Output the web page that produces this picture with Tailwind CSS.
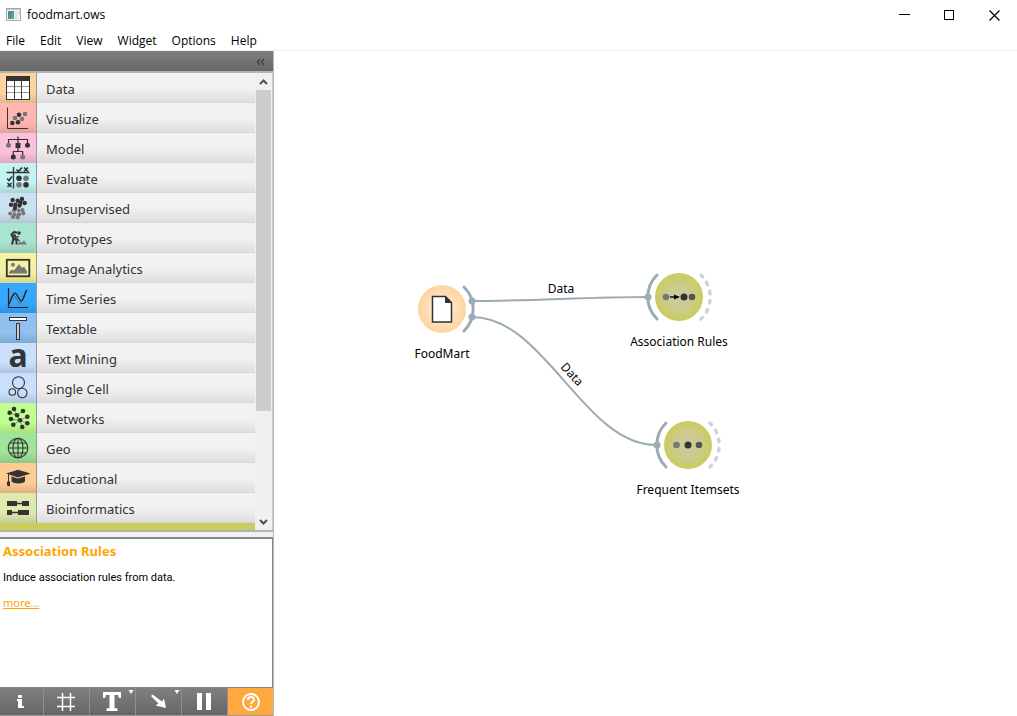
<!DOCTYPE html>
<html lang="en">
<head>
<meta charset="utf-8">
<title>foodmart.ows</title>
<script src="https://cdn.jsdelivr.net/npm/@tailwindcss/browser@4"></script>
</head>
<body class="h-screen flex flex-col overflow-hidden bg-white text-black text-[12px] font-['Open_Sans',sans-serif]">
<header class="shrink-0 border-b border-[#f0f0f0]">
  <div class="h-[30px] flex items-center pl-[6px]">
    <svg class="w-[16px] h-[16px] mr-[5px]" viewBox="0 0 16 16" aria-hidden="true">
      <defs><linearGradient id="win" x1="0" y1="0" x2="1" y2="1"><stop offset="0" stop-color="#4a7f9c"/><stop offset="1" stop-color="#58b07c"/></linearGradient></defs>
      <rect x=".5" y="1.5" width="14" height="12" fill="#f4f4f4" stroke="#a3a9ad"/><path d="M1 2.500h13" stroke="#c5cbd0"/><rect x="2" y="4" width="6" height="8" fill="url(#win)"/><rect x="9" y="4" width="2" height="8" fill="#dfe1e4"/><rect x="12" y="4" width="2" height="4" fill="#d5dce8"/>
    </svg>
    <h1 class="text-[12px] leading-4">foodmart.ows</h1>
    <div class="ml-auto flex h-full">
      <button aria-label="Minimize" class="w-[45px] flex items-center justify-center"><svg width="11" height="11"><path d="M0 4.500h11" stroke="#000"/></svg></button>
      <button aria-label="Maximize" class="w-[45px] flex items-center justify-center"><svg width="11" height="11"><rect x=".5" y=".5" width="9" height="9" fill="none" stroke="#000"/></svg></button>
      <button aria-label="Close" class="w-[45px] flex items-center justify-center"><svg width="11" height="11"><path d="M.5 .5l10 10M10.500 .5l-10 10" stroke="#000" stroke-width="1.200"/></svg></button>
    </div>
  </div>
  <nav class="h-[20px] flex items-end gap-[15px] pl-[6px] leading-[18px]">
    <button>File</button><button>Edit</button><button>View</button><button>Widget</button><button>Options</button><button>Help</button>
  </nav>
</header>
<div class="flex-1 min-h-0 flex">
  <aside class="w-[274px] shrink-0 flex flex-col border-r border-[#b4b9b9] bg-[#f0f0f0]">
    <div class="h-[20px] shrink-0 bg-linear-to-b from-[#808080] to-[#666] flex items-end justify-end pr-[8px] pb-[5px]">
      <button aria-label="Collapse"><svg class="block" width="10" height="8" fill="none" stroke="#444" stroke-width="1.500"><path d="M5 1L2.500 4L5 7M9 1L6.500 4L9 7"/></svg></button>
    </div>
    <div class="flex-1 min-h-0 flex border-y-2 border-[#aeb4b4]">
      <ul class="flex-1 min-w-0 overflow-hidden text-[13px] text-[#333] font-['Noto_Sans',sans-serif]" id="categories"></ul>
      <div class="w-[17px] shrink-0 flex flex-col bg-[#f0f0f0]">
        <button aria-label="Scroll up" class="h-[17px] flex items-center justify-center"><svg width="9" height="6"><path d="M1 5L4.500 1.500L8 5" fill="none" stroke="#505050" stroke-width="2"/></svg></button>
        <div class="flex-1 min-h-0 px-px"><div class="h-[76%] bg-[#cdcdcd]"></div></div>
        <button aria-label="Scroll down" class="h-[17px] flex items-center justify-center"><svg width="9" height="6"><path d="M1 1L4.500 4.500L8 1" fill="none" stroke="#505050" stroke-width="2"/></svg></button>
      </div>
      <div class="w-px bg-[#c8cccc]"></div>
    </div>
    <div class="h-[5px] shrink-0"></div>
    <section class="h-[151px] shrink-0 bg-white border-t-2 border-r border-b border-[#828787] pl-[3px] pt-[4px] font-['Noto_Sans',sans-serif]">
      <h2 class="text-[13px] leading-4 font-bold text-[#ffa500]">Association Rules</h2>
      <p class="text-[11px] leading-4 mt-[11px] font-[Roboto,sans-serif]">Induce association rules from data.</p>
      <a href="#" class="block w-fit text-[11px] leading-4 mt-[9px] text-[#ffa500] underline">more...</a>
    </section>
    <div class="h-[28px] shrink-0 flex bg-linear-to-b from-[#808080] to-[#666] border-b border-[#999]">
      <button aria-label="Info" class="w-[44px] border-r border-[#8f8f8f]"><svg class="block" width="43" height="27" fill="#fff"><rect x="18" y="7" width="4" height="3" rx="1"/><path d="M17 11h5v7h2v2h-6v-7h-1z"/></svg></button>
      <button aria-label="Grid" class="w-[46px] border-r border-[#8f8f8f]"><svg class="block" width="45" height="27" stroke="#fff" stroke-width="1.500"><path d="M18.500 5v18M26.500 5v18M13 9.500h18M13 18.500h18"/></svg></button>
      <button aria-label="Text annotation" class="w-[46px] border-r border-[#8f8f8f]"><svg class="block" width="45" height="27" fill="#fff"><path d="M13 4h18v6h-2l-1-3h-3.500v13l3 .5V23h-11v-2.500l3-.5V7H16l-1 3h-2zM38.500 2h5l-2.500 4z"/></svg></button>
      <button aria-label="Arrow annotation" class="w-[46px] border-r border-[#8f8f8f]"><svg class="block" width="45" height="27" fill="#fff"><path d="M15 8l1.500-1.500L26 13.500l2-3L30 20l-10.500-2.500 3-2zM38.500 2h5l-2.500 4z"/></svg></button>
      <button aria-label="Pause" class="w-[46px] border-r border-[#8f8f8f]"><svg class="block" width="45" height="27" fill="#fff"><path d="M15 5h5v17h-5zM24 5h5v17h-5z"/></svg></button>
      <button aria-label="Help" class="flex-1 bg-[#ffa840]"><svg class="block" width="45" height="27" fill="none" stroke="#fff" stroke-width="2"><circle cx="23" cy="14" r="8"/><path d="M20 12c0-4 6-4 6-.5 0 2.500-3 2-3 4.500M23 17.500v2"/></svg></button>
    </div>
  </aside>
  <main class="flex-1 min-w-0">
    <svg class="block w-full h-full font-['Noto_Sans',sans-serif]" role="img" aria-label="Workflow canvas">
      <defs>
        <radialGradient id="peach"><stop offset="0" stop-color="#fff3e5"/><stop offset="1" stop-color="#ffd39f"/></radialGradient>
        <radialGradient id="olive"><stop offset="0" stop-color="#cbcb9f"/><stop offset=".5" stop-color="#cbcb90"/><stop offset="1" stop-color="#cbcb5e"/></radialGradient>
      </defs>
      <g fill="none" stroke="#9cacb4" stroke-width="2">
        <path d="M198 250C258 250 314 246 374 246"/>
        <path d="M198 266C271 266 310 394 382 394"/>
      </g>
      <g fill="none" stroke="#9cacb4" stroke-width="3" stroke-linecap="round">
        <path d="M190 236a31 31 0 0 1 0 44"/>
        <path d="M383 224a31 31 0 0 0 0 44"/>
        <path d="M392 372a31 31 0 0 0 0 44"/>
      </g>
      <g fill="none" stroke="#ccd5d9" stroke-width="3.500" stroke-linecap="round" stroke-dasharray="2.500 6.800">
        <path d="M427 224a31 31 0 0 1 0 44"/>
        <path d="M436 372a31 31 0 0 1 0 44"/>
      </g>
      <g fill="#9cacb4"><circle cx="198" cy="250" r="3.500"/><circle cx="198" cy="266" r="3.500"/><circle cx="374" cy="246" r="3.500"/><circle cx="383" cy="394" r="3.500"/></g>
      <circle cx="168" cy="258" r="24" fill="url(#peach)"/>
      <circle cx="405" cy="246" r="24" fill="url(#olive)"/>
      <circle cx="414" cy="394" r="24" fill="url(#olive)"/>
      <path d="M158.500 245.500h13l6 6v19.500h-19z" fill="#fff" stroke="#333" stroke-width="1.500"/><path d="M171 245v7h7z" fill="#333"/>
      <circle cx="392" cy="246" r="3.300" fill="#777"/><path d="M396 246h6" stroke="#111" stroke-width="1.500"/><path d="M400 243.500l6 2.500-6 2.500z"/><circle cx="410" cy="246" r="3.500" fill="#333"/><circle cx="418" cy="246" r="3.300" fill="#555"/>
      <circle cx="402.500" cy="394" r="3.300" fill="#777"/><circle cx="414" cy="394" r="3.500" fill="#333"/><circle cx="425" cy="394" r="3.300" fill="#555"/>
      <g font-size="12" text-anchor="middle">
        <text x="287" y="242">Data</text>
        <text transform="translate(295 326) rotate(48)" x="0" y="0">Data</text>
        <text x="168" y="307">FoodMart</text>
        <text x="405" y="295">Association Rules</text>
        <text x="414" y="443">Frequent Itemsets</text>
      </g>
    </svg>
  </main>
</div>
<script>
const dots = (list, r, fill) => list.map(p => `<circle cx="${p[0]}" cy="${p[1]}" r="${r}" fill="${fill}"/>`).join('');
const D = '#333', G = '#777';
const categories = [
  ['Data', '#ffd39f', '<rect x="6.5" y="3.500" width="23" height="23" fill="#fff" stroke="#333"/><path d="M6 3h24v5H6z" fill="#333"/><path d="M7 13.500h22M7 19.500h22" stroke="#999"/><path d="M14.500 8v18M21.500 8v18" stroke="#444"/>'],
  ['Visualize', '#ffb7b1', '<path d="M7.500 4.500v21H28" fill="none" stroke="#333"/>' + dots([[12.3,20],[18,19.3],[19,11.7]], 2.3, D) + dots([[15,15],[25,11],[22,16]], 2.3, G)],
  ['Model', '#fac1d9', '<path d="M18 3.500v9M8.500 12V6.500h19V12M13.300 24v-5.500h9.400V24M18 15v3.500" fill="none" stroke="#333" stroke-width="1.200"/><path d="M15.500 10h5v5h-5z" fill="#333"/>' + dots([[8.5,12.3],[22.7,24]], 2.5, G) + dots([[27.5,12.3],[13.3,24]], 2.5, D)],
  ['Evaluate', '#c3f3f3', '<path d="M13.500 4v21.500M6.500 9.500h23" stroke="#333" stroke-width="1.300"/><path d="M16.500 6.500l2 2 3.500-4M24 4.500l4 4M28 4.500l-4 4M7 15.500l2 2 3-4M7.500 20l4 4M11.500 20l-4 4" fill="none" stroke="#333" stroke-width="1.700"/>' + dots([[19,15.3],[26,21.7]], 2.8, D) + dots([[26,15.3],[19,21.7]], 2.8, G)],
  ['Unsupervised', '#cae1ef', dots([[14,17.5],[18.7,17.5],[22.5,17],[10.3,20.5],[14.7,21.5],[19,21.5],[23.3,20.3],[13,24],[17.7,24.3]], 2.1, G) + dots([[12.7,7],[17.7,7.7],[22,6],[11,11.7],[15.3,11.7],[19.5,12.5],[24.7,10],[15,15],[20.5,9.8]], 2.2, D)],
  ['Prototypes', '#a9e4d0', '<path d="M17 21.500l3-3 2 1 2-2 3 4z" fill="#777"/><circle cx="19" cy="10" r="1.800" fill="#333"/><path d="M17 9.500l-3-.5-2.500 2.500 2 4-1.500 6M13.500 15l3 2.500v4" fill="none" stroke="#333" stroke-width="2"/><path d="M14.500 11l1.500 3 3-.5M13 12l6.500 6" fill="none" stroke="#333" stroke-width="1.200"/>'],
  ['Image Analytics', '#f5f2a1', '<rect x="6.800" y="6.800" width="22.500" height="16.500" fill="none" stroke="#333" stroke-width="1.800"/><circle cx="13" cy="11.700" r="2" fill="#777"/><path d="M9 20.500v-1.500l3-2.500 2 1 5-6.500 3 4 2-1.500 3 5v2z" fill="#777"/>'],
  ['Time Series', '#35a7ff', '<path d="M8.500 5v19.500H28" fill="none" stroke="#222" stroke-width="1.200"/><path d="M10 17c3-9 5-4 8 1s4 0 8-10" fill="none" stroke="#5a7188" stroke-width="1.300"/><path d="M9 21c4-8 5-14 8-9s4 8 6 4 2-7 4-9" fill="none" stroke="#222" stroke-width="1.300"/>'],
  ['Textable', '#8fc0ef', '<rect x="9.500" y="4.500" width="17" height="3" fill="#fff" stroke="#333"/><rect x="16.500" y="10.500" width="3" height="16" fill="#ccc" stroke="#333"/>'],
  ['Text Mining', '#c9dffc', '<text x="18" y="24" text-anchor="middle" font-size="32" font-weight="700" fill="#333">a</text>'],
  ['Single Cell', '#c9dffc', '<g fill="none" stroke="#333" stroke-width="1.100"><circle cx="18.500" cy="9.700" r="6"/><circle cx="12.300" cy="19" r="3.300"/><circle cx="22.300" cy="20" r="4.700"/></g>'],
  ['Networks', '#bfff8f', '<path d="M14 6l3 6.500 6-4.500M9.700 9.700l7.300 2.600 3 5-9-1.300M13.300 21.700l6.700-4.400 2.300 6.700M17 12.300l3 5 7.300 3M20 17.300l7.300-3.600" fill="none" stroke="#666" stroke-width=".7"/>' + dots([[14,6],[23,8],[9.7,9.7],[17,12.3],[27.3,13.7],[11,16],[20,17.3],[13.3,21.7],[22.3,24],[27.3,20.3]], 2.3, D)],
  ['Geo', '#9fe599', '<g fill="none" stroke="#333" stroke-width="1.100"><circle cx="18" cy="15" r="9.800"/><ellipse cx="18" cy="15" rx="5" ry="9.800"/><path d="M18 5v20M8 15h20M9.500 10h17M9.500 20h17"/></g>'],
  ['Educational', '#ffcb94', '<path d="M18 6.700L30.500 10.500 18 14.500 6 10.500z" fill="#333"/><path d="M11.500 13.500L18 15.500l7-2v5c-2 2.600-11.500 2.600-13.500 0z" fill="#333"/><path d="M8.500 11v8" stroke="#333"/><path d="M7 18.500h3v5l-3-1z" fill="#333"/>'],
  ['Bioinformatics', '#deeaad', '<path d="M7 8h10v5H7zM22 8h7v5h-7zM7 17h5v5H7zM18 17h11v5H18z" fill="#333"/><path d="M16 10.500h7M11 19.500h8" stroke="#333" stroke-width="1.500"/>']
];
document.getElementById('categories').innerHTML = categories.map(([name, color, icon]) => `
  <li><button class="w-full h-[30px] flex items-center text-left">
    <span class="w-[37px] h-full border-r border-[#999]" style="background:linear-gradient(${color} 65%, color-mix(in srgb, ${color} 88%, black))"><svg class="block overflow-visible" width="36" height="30" viewBox="0 0 36 30" aria-hidden="true">${icon}</svg></span>
    <span class="flex-1 h-full pl-[9px] leading-[32px] border-b border-[#d6d6d6] bg-linear-to-b from-[#f2f2f2] from-50% to-[#dedede]">${name}</span>
  </button></li>`).join('') + '<li><button aria-label="Associate" class="block w-full h-[30px] bg-[#cbcb5e]"></button></li>';
</script>
</body>
</html>
